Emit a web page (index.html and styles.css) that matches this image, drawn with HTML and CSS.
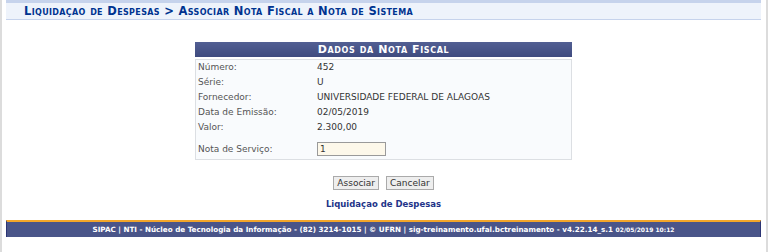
FILE: index.html
```html
<!DOCTYPE html>
<html lang="pt-BR">
<head>
    <meta charset="UTF-8">
    <title>SIPAC - Associar Nota Fiscal</title>
    <link rel="stylesheet" href="styles.css">
</head>
<body>
    <div class="frame">
        <div class="content">
            <h2 class="title">Liquidaçao de Despesas &gt; Associar Nota Fiscal a Nota de Sistema</h2>

            <table class="form-table">
                <caption>Dados da Nota Fiscal</caption>
                <tbody>
                    <tr><th>Número:</th><td>452</td></tr>
                    <tr><th>Série:</th><td>U</td></tr>
                    <tr><th>Fornecedor:</th><td>UNIVERSIDADE FEDERAL DE ALAGOAS</td></tr>
                    <tr><th>Data de Emissão:</th><td>02/05/2019</td></tr>
                    <tr><th>Valor:</th><td>2.300,00</td></tr>
                    <tr class="input-row"><th>Nota de Serviço:</th><td><input type="text" value="1"></td></tr>
                </tbody>
            </table>

            <div class="buttons">
                <button>Associar</button>
                <button>Cancelar</button>
            </div>
            <div class="back-link"><a href="#">Liquidaçao de Despesas</a></div>
        </div>

        <div class="footer">
            SIPAC | NTI - Núcleo de Tecnologia da Informação - (82) 3214-1015 | © UFRN | sig-treinamento.ufal.bctreinamento - v4.22.14_s.1 <span class="date">02/05/2019 10:12</span>
        </div>
    </div>
</body>
</html>
```

FILE: styles.css
```css
body {
    margin: 0;
    background-color: #fff;
    font-family: "DejaVu Sans", Verdana, sans-serif;
    font-size: 9px;
    color: #333;
}
.frame {
    height: 252px;
    box-sizing: border-box;
    border-left: 2px solid #dcdcdc;
    border-right: 2px solid #dcdcdc;
    padding: 0 5px 0 4px;
}
.content {
    height: 220px;
}
.title {
    margin: 0;
    height: 16px;
    line-height: 17px;
    padding-left: 18px;
    background-color: #eef3fb;
    border-top: 3px solid #c6d3ec;
    border-bottom: 1px solid #c6d3ec;
    font-size: 11.5px;
    font-variant: small-caps;
    font-weight: bold;
    color: #003390;
    letter-spacing: 0.35px;
}
.form-table {
    margin: 22px auto 0;
    width: 377px;
    border-collapse: collapse;
    background-color: #f9fbfd;
    border: 1px solid #dcdfe3;
}
.form-table caption {
    height: 15px;
    line-height: 15px;
    background: linear-gradient(#525f93, #3f4b7f);
    color: #fff;
    font-weight: bold;
    font-variant: small-caps;
    font-size: 11px;
    letter-spacing: 0.6px;
    border-bottom: 2px solid #fff;
}
.form-table th {
    width: 117px;
    text-align: left;
    font-weight: normal;
    color: #555;
    padding: 1px 2px 3px;
    height: 11px;
}
.form-table td {
    padding: 1px 0 3px;
}
.form-table tr.input-row th,
.form-table tr.input-row td {
    padding-top: 7px;
    padding-bottom: 3px;
}
.form-table input {
    width: 63px;
    height: 10px;
    padding: 1px 2px;
    font-family: inherit;
    font-size: 9px;
    color: #333;
    background-color: #fdf8ea;
    border: 1px solid #9a9a9a;
}
.buttons {
    margin-top: 16px;
    text-align: center;
}
.buttons button {
    height: 14px;
    padding: 0 3px;
    font-family: inherit;
    font-size: 9px;
    color: #333;
    background-color: #eee;
    border: 1px solid #aaa;
    margin: 0 2px;
}
.back-link {
    margin-top: 9px;
    text-align: center;
}
.back-link a {
    color: #223388;
    font-weight: bold;
    font-size: 8.5px;
    text-decoration: none;
}
.footer {
    border-top: 2px solid #f3a62a;
    background-color: #4a5589;
    border-left: 1px solid #2b3474;
    border-right: 1px solid #2b3474;
    height: 15px;
    line-height: 15px;
    text-align: center;
    color: #fff;
    font-weight: bold;
    font-size: 7.2px;
}
.footer .date {
    font-size: 6px;
}
```
